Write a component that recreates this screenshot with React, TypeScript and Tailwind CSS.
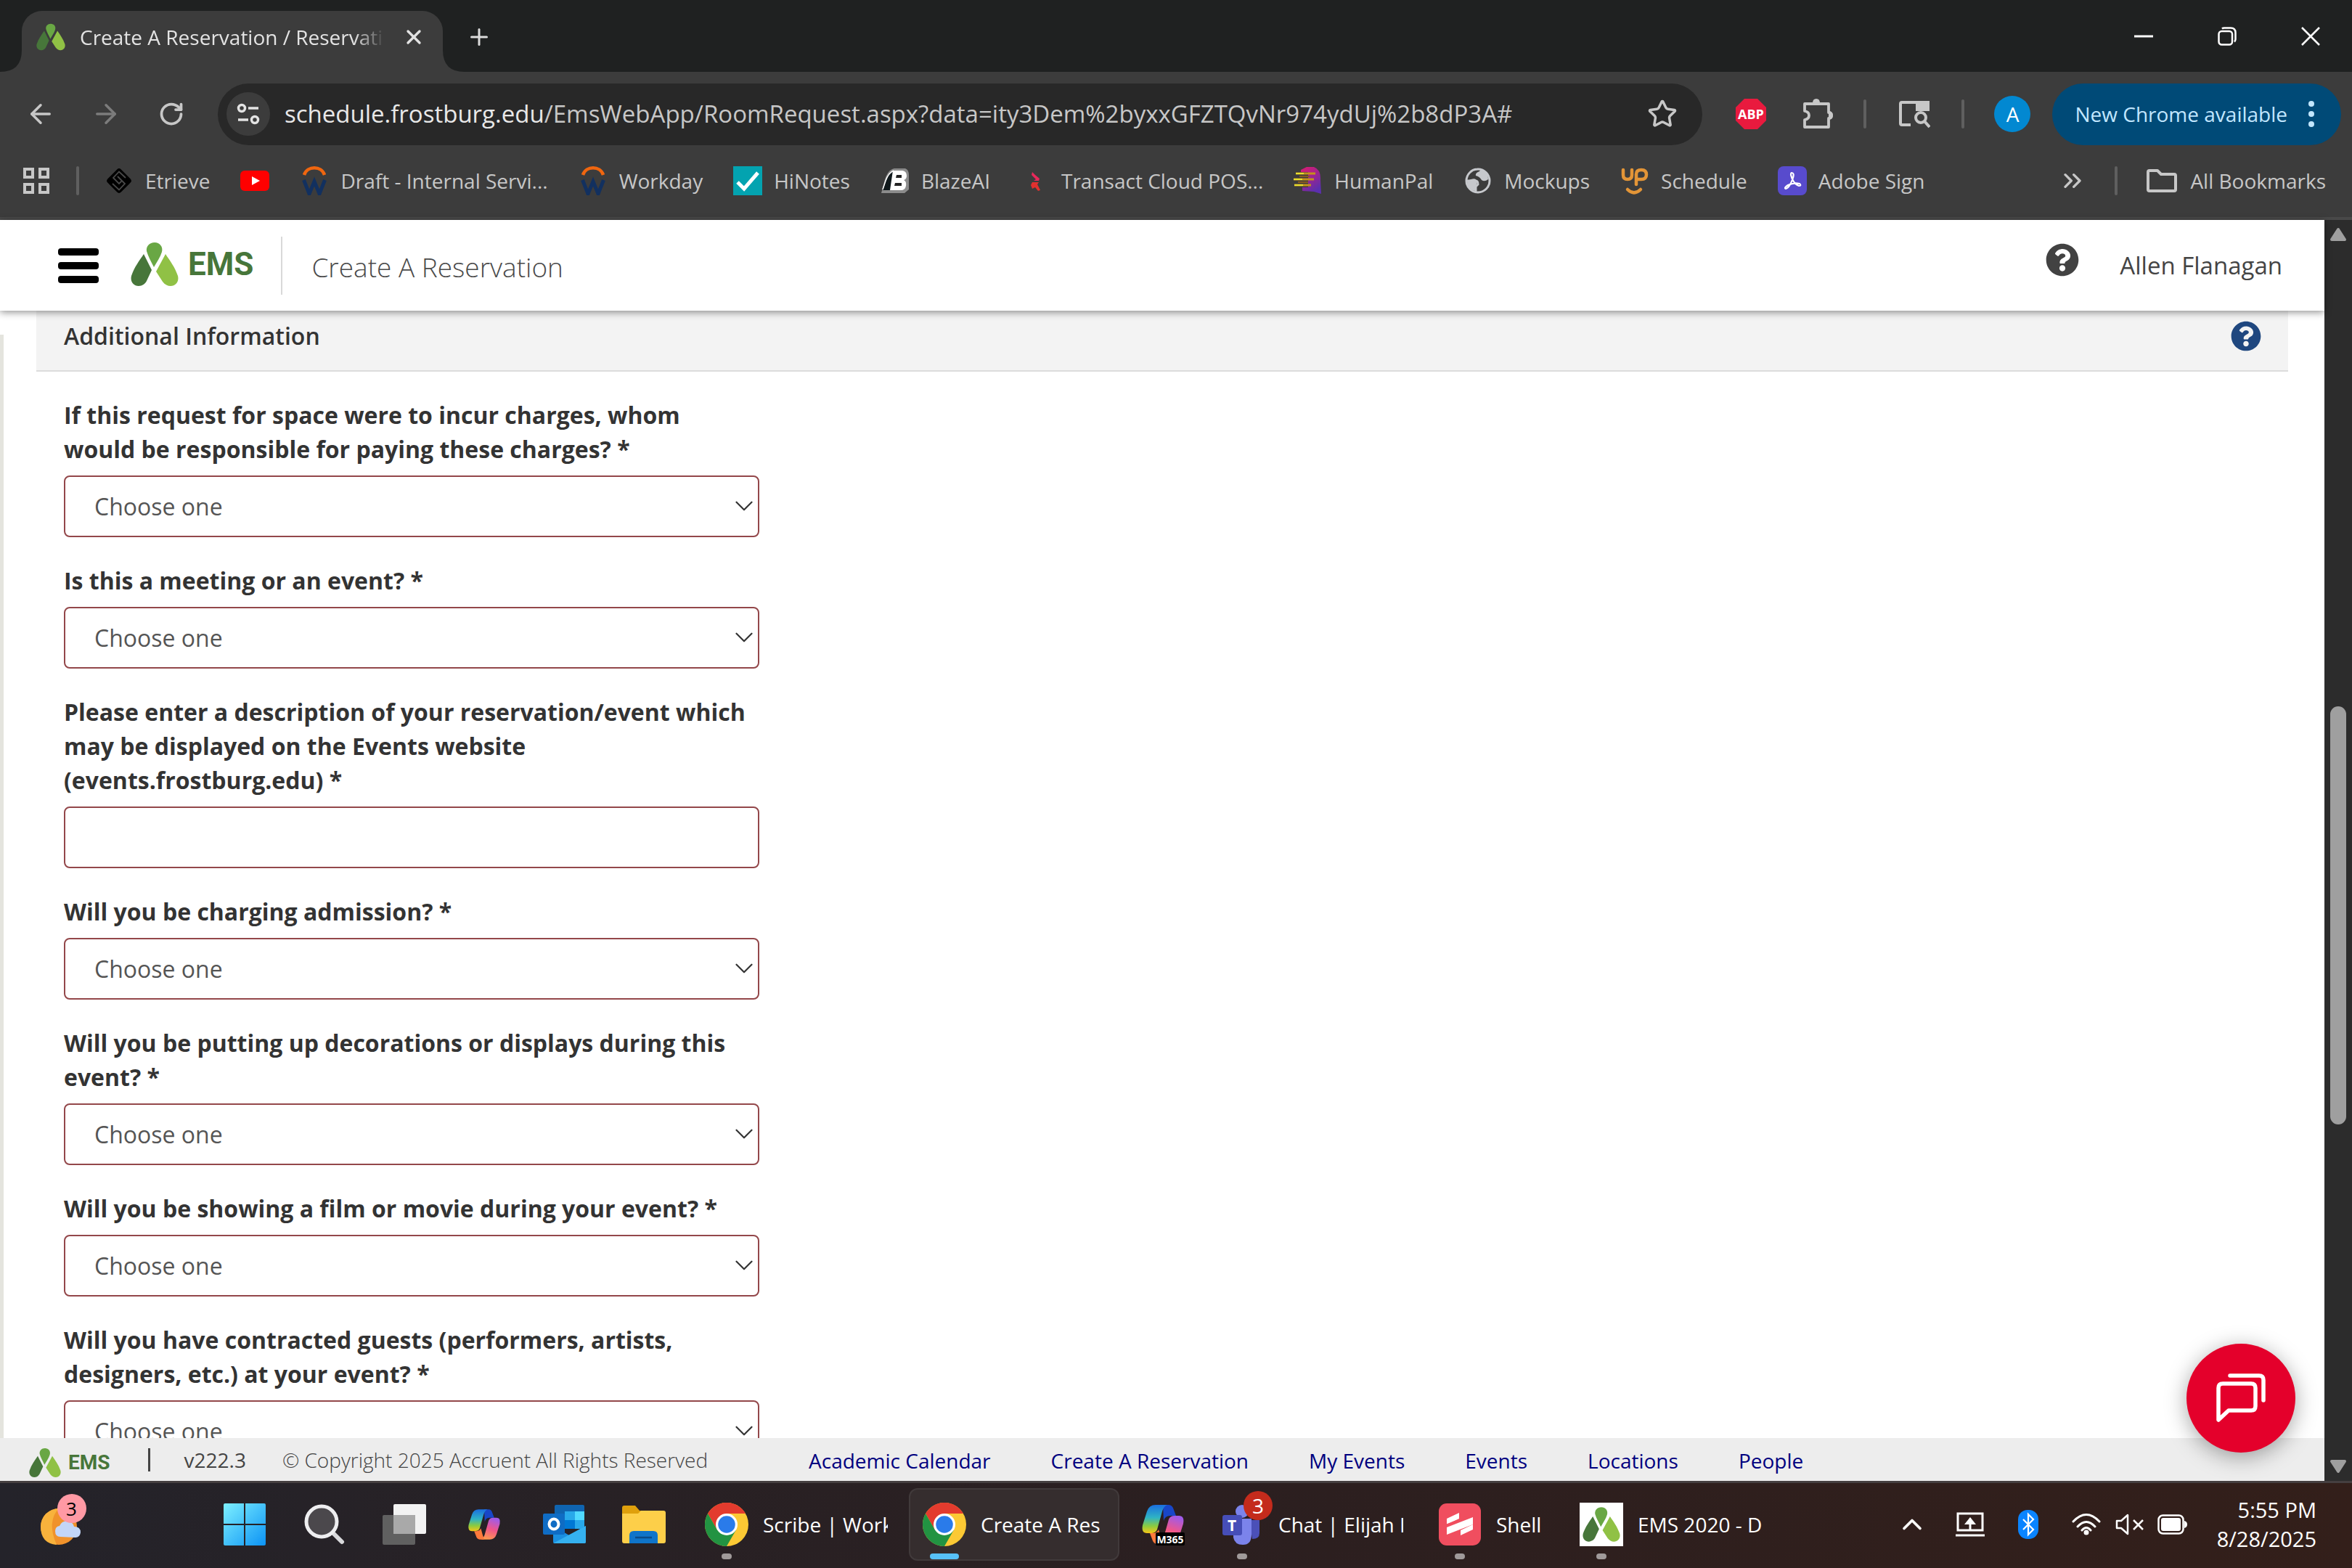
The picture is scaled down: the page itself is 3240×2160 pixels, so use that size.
import React from 'react';
import {
    ArrowLeft, ArrowRight, ChevronDown, ChevronUp, ChevronsRight, Plus, RotateCw, Star, X,
} from 'lucide-react';
import { FaQuestionCircle } from 'react-icons/fa';

interface Field {
    id: string;
    label: string;
    type: 'select' | 'text';
}

const FIELDS: Field[] = [
    { id: 'charges', label: 'If this request for space were to incur charges, whom would be responsible for paying these charges? *', type: 'select' },
    { id: 'kind', label: 'Is this a meeting or an event? *', type: 'select' },
    { id: 'description', label: 'Please enter a description of your reservation/event which may be displayed on the Events website (events.frostburg.edu) *', type: 'text' },
    { id: 'admission', label: 'Will you be charging admission? *', type: 'select' },
    { id: 'decorations', label: 'Will you be putting up decorations or displays during this event? *', type: 'select' },
    { id: 'film', label: 'Will you be showing a film or movie during your event? *', type: 'select' },
    { id: 'guests', label: 'Will you have contracted guests (performers, artists, designers, etc.) at your event? *', type: 'select' },
];

const FOOTER_LINKS = ['Academic Calendar', 'Create A Reservation', 'My Events', 'Events', 'Locations', 'People'];

/* ---------- Logos ---------- */

const EmsMark = ({ className }: { className?: string }) => (
    <svg viewBox="0 0 66 60" className={className} aria-hidden="true">
        <path d="M18 16L29 38L22 53C20 57 16 60 11 60C4 60-1 54 1 46C5 34 12 25 18 16Z" fill="#47763a" />
        <path d="M48 16L35 40L44 54C47 58 51 60 55 60C62 60 67 54 65 46C61 34 54 25 48 16Z" fill="#90c145" />
        <path d="M33 0C40 0 45 6 43 13C41 20 36 27 32 34C28 26 24 19 22 12C21 5 26 0 33 0Z" fill="#69a744" />
    </svg>
);

const ChromeLogo = () => (
    <svg viewBox="0 0 48 48" className="size-15 shrink-0" aria-hidden="true">
        <circle cx="24" cy="24" r="24" fill="#fcc934" />
        <path d="M3.2 12A24 24 0 0 1 44.8 12H24L13.6 30Z" fill="#e33b2e" />
        <path d="M3.2 12L13.6 30L34.4 30L24 48A24 24 0 0 1 3.2 12Z" fill="#229342" />
        <circle cx="24" cy="24" r="12" fill="#fff" />
        <circle cx="24" cy="24" r="9.4" fill="#2a7bea" />
    </svg>
);

const WorkdayLogo = () => (
    <svg viewBox="0 0 40 40" className="size-10">
        <path d="M6 12C10 -1 30 -1 34 12" fill="none" stroke="#f0660f" strokeWidth="4.5" />
        <path d="M5.500 19L13 38L20 21L27 38L34.500 19" fill="none" stroke="#12305f" strokeWidth="5" />
    </svg>
);

const EtrieveLogo = () => (
    <svg viewBox="0 0 40 40" className="size-10">
        <rect x="7" y="7" width="26" height="26" rx="4" fill="#000" transform="rotate(45 20 20)" />
        <path d="M29 16L20 7.500L12 16L20 24L24 20L18 14M11 24L20 32.500L28 24L20 16" fill="none" stroke="#4a4a4a" strokeWidth="1.800" />
    </svg>
);

const YoutubeLogo = () => (
    <svg viewBox="0 0 40 40" className="size-10">
        <rect x="0" y="6" width="40" height="28" rx="6" fill="#f00" />
        <path d="M16 14V26L27 20Z" fill="#fff" />
    </svg>
);

const HiNotesLogo = () => (
    <svg viewBox="0 0 40 40" className="size-10">
        <rect width="40" height="40" fill="#03a3b0" />
        <path d="M6 22L15 31L34 9" fill="none" stroke="#fff" strokeWidth="5" />
    </svg>
);

const BlazeLogo = () => (
    <svg viewBox="0 0 40 40" className="size-10">
        <path d="M1 37L5 22Q9 5 19 3H34Q39 5 39 12V32L33 37Z" fill="#8b8b8b" />
        <path d="M3 33L8 18Q12 8 20 7V33Z" fill="#10191c" />
        <path d="M3 32L7 20Q11 9 18 6" fill="none" stroke="#fff" strokeWidth="1.500" />
        <path d="M17 6H30Q36 7 36 13Q36 18 32 19Q36 21 35 27Q34 33 28 33H13Z" fill="#fff" />
        <path d="M22 12H29V16H21ZM20 23H29V27H19Z" fill="#222" />
    </svg>
);

const TransactLogo = () => (
    <svg viewBox="0 0 40 40" className="size-10">
        <path d="M16 8L20 12L26 17L25 20H18L21 18L15 12Z" fill="#e8285a" />
        <path d="M16 22L25 22L23 25L27 33L24 34L20 29L16 31L14 26Z" fill="#e0302f" />
    </svg>
);

const HumanPalLogo = () => (
    <svg viewBox="0 0 40 40" className="size-10">
        <defs>
            <linearGradient id="hp" x1="0" y1="0" x2="0.5" y2="1">
                <stop offset="0" stopColor="#e01a70" />
                <stop offset="1" stopColor="#5b2fae" />
            </linearGradient>
        </defs>
        <path d="M10 5L18 1H28Q38 5 37 19L38 38L28 35L12 34L12 29H20V8H10Z" fill="url(#hp)" />
        <path d="M3 10H30M0 18H28M1 26H24" stroke="#c4901c" strokeWidth="3" />
        <path d="M8 14H22M6 22H20" stroke="#8a5a20" strokeWidth="2" />
        <path d="M3 10H14M0 18H12M1 26H13" stroke="#e5e02f" strokeWidth="2" />
    </svg>
);

const GlobeLogo = () => (
    <svg viewBox="0 0 40 40" className="size-10">
        <circle cx="20" cy="20" r="16" fill="#3c3c3c" stroke="#c6c8cc" strokeWidth="3" />
        <path d="M5 20Q14 16 17 18Q20 24 17 27L16 34Q5 32 5 20Z" fill="#c6c8cc" />
        <path d="M24 4L22 7Q16 9 17 13Q22 14 25 19Q29 22 34 18Q35 8 24 4Z" fill="#c6c8cc" />
        <path d="M5 20H17Q20 20 20 25L17 28V35" fill="none" stroke="#c6c8cc" strokeWidth="3" />
    </svg>
);

const UpLogo = () => (
    <svg viewBox="0 0 40 40" className="size-10" fill="none" stroke="#e39537" strokeWidth="4.500" strokeLinecap="round">
        <path d="M4 5V12Q4 18 10 18Q16 18 16 12V5M22 25V11Q22 5 29 5Q36 5 36 11.500Q36 18 29 18H24" />
        <path d="M10 32Q19 41 28 32" />
    </svg>
);

const AdobeLogo = () => (
    <svg viewBox="0 0 40 40" className="size-10">
        <rect width="40" height="40" rx="8" fill="#584bcd" />
        <path d="M19 9Q23 9 21 16Q16 30 11 31Q8 30 14 26Q22 22 30 24Q33 27 29 27Q21 24 18 12Q18 9 19 9Z" fill="none" stroke="#fff" strokeWidth="2.200" />
    </svg>
);

const BOOKMARKS: { label: string; icon: React.ReactNode }[] = [
    { label: 'Etrieve', icon: <EtrieveLogo /> },
    { label: '', icon: <YoutubeLogo /> },
    { label: 'Draft - Internal Servi...', icon: <WorkdayLogo /> },
    { label: 'Workday', icon: <WorkdayLogo /> },
    { label: 'HiNotes', icon: <HiNotesLogo /> },
    { label: 'BlazeAI', icon: <BlazeLogo /> },
    { label: 'Transact Cloud POS...', icon: <TransactLogo /> },
    { label: 'HumanPal', icon: <HumanPalLogo /> },
    { label: 'Mockups', icon: <GlobeLogo /> },
    { label: 'Schedule', icon: <UpLogo /> },
    { label: 'Adobe Sign', icon: <AdobeLogo /> },
];

/* ---------- Browser chrome ---------- */

const TabStrip = () => (
    <div className="flex h-[99px] shrink-0 bg-[#1f2121] pl-[30px]">
        <div className="relative mt-[15px] flex w-[580px] items-center rounded-t-[28px] bg-[#3c3c3c] pr-4 pl-5 pb-3">
            <svg viewBox="0 0 30 30" className="absolute bottom-0 -left-[30px] size-[30px]">
                <path d="M30 0V30H0Q30 30 30 0Z" fill="#3c3c3c" />
            </svg>
            <svg viewBox="0 0 30 30" className="absolute bottom-0 -right-[30px] size-[30px]">
                <path d="M0 0V30H30Q0 30 0 0Z" fill="#3c3c3c" />
            </svg>
            <EmsMark className="h-[38px] w-10" />
            <span className="ml-5 w-[420px] overflow-hidden text-[28px] whitespace-nowrap text-[#e3e3e3] [mask-image:linear-gradient(to_right,black_90%,transparent)]">
                Create A Reservation / Reservati
            </span>
            <button aria-label="Close tab" className="ml-auto grid size-12 place-items-center text-[#e3e3e3]">
                <X size={32} strokeWidth={2.5} />
            </button>
        </div>
        <button aria-label="New tab" className="mt-[21px] ml-5 grid size-[60px] place-items-center text-[#dcdcdc]">
            <Plus size={36} strokeWidth={2} />
        </button>
        <div className="ml-auto flex text-white">
            <button aria-label="Minimize" className="grid w-[115px] place-items-center">
                <svg viewBox="0 0 26 26" className="size-[26px]"><path d="M0 13H26" stroke="currentColor" strokeWidth="3" /></svg>
            </button>
            <button aria-label="Restore" className="grid w-[115px] place-items-center">
                <svg viewBox="0 0 26 26" className="size-[26px]" fill="none" stroke="currentColor" strokeWidth="2.5">
                    <rect x="1.500" y="6" width="18.500" height="18.500" rx="4" />
                    <path d="M6 2.500Q7 1.500 9 1.500H18Q24.500 1.500 24.500 8V17Q24.500 19 23 20.500" />
                </svg>
            </button>
            <button aria-label="Close" className="grid w-[115px] place-items-center">
                <svg viewBox="0 0 26 26" className="size-[26px]"><path d="M1 1L25 25M25 1L1 25" stroke="currentColor" strokeWidth="2.500" /></svg>
            </button>
        </div>
    </div>
);

const AddressRow = () => (
    <div className="flex h-[116px] shrink-0 items-center pr-[15px] pl-[26px] text-[#c7c7c7]">
        <button aria-label="Back" className="grid size-15 place-items-center"><ArrowLeft size={42} strokeWidth={2} /></button>
        <button aria-label="Forward" className="ml-[30px] grid size-15 place-items-center text-[#7c7c7c]"><ArrowRight size={42} strokeWidth={2} /></button>
        <button aria-label="Reload" className="ml-[30px] grid size-15 place-items-center"><RotateCw size={36} strokeWidth={2.5} /></button>
        <div className="ml-[34px] flex h-[85px] flex-1 items-center rounded-full bg-[#282828] pr-[34px] pl-3">
            <button aria-label="Site information" className="grid size-15 place-items-center rounded-full bg-[#3c3c3c] text-[#e3e3e3]">
                <svg viewBox="0 0 32 32" className="size-8" fill="none" stroke="currentColor" strokeWidth="3.5">
                    <circle cx="7" cy="8" r="4.500" />
                    <path d="M16 8H30M2 24H16" />
                    <circle cx="25" cy="24" r="4.500" />
                </svg>
            </button>
            <div role="textbox" aria-label="Address" className="ml-5 flex-1 text-[33px] whitespace-nowrap text-[#c7c7c7]">
                <span className="text-[#e8e8e8]">schedule.frostburg.edu</span>/EmsWebApp/RoomRequest.aspx?data=ity3Dem%2byxxGFZTQvNr974ydUj%2b8dP3A#
            </div>
            <button aria-label="Bookmark this tab"><Star size={42} strokeWidth={2} /></button>
        </div>
        <button aria-label="AdBlock Plus" className="ml-[46px]">
            <svg viewBox="0 0 42 42" className="size-[42px]">
                <path d="M12 0H30L42 12V30L30 42H12L0 30V12Z" fill="#e91a3e" />
                <text x="21" y="28" textAnchor="middle" fontSize="18" fontWeight="700" fill="#fff">ABP</text>
            </svg>
        </button>
        <button aria-label="Extensions" className="ml-[50px]">
            <svg viewBox="0 0 42 42" className="size-[42px]">
                <path d="M3 7H36V19Q40 19 40 23Q40 27 36 27V39H3V29Q9 28 9 23Q9 18 3 17Z" fill="none" stroke="currentColor" strokeWidth="3.800" strokeLinejoin="round" />
                <path d="M14 6Q14 0 19 0Q24 0 24 6ZM36 17Q42 18 42 23Q42 28 36 29Z" fill="currentColor" />
            </svg>
        </button>
        <span className="ml-[42px] h-10 w-1 rounded-full bg-[#5f5f5f]" />
        <button aria-label="Search tabs" className="ml-11">
            <svg viewBox="0 0 44 40" className="h-10 w-11" fill="none" stroke="currentColor" strokeWidth="4">
                <path d="M17 35H5Q3 35 3 33V6Q3 4 5 4H41V16" />
                <path d="M24 2H43V16H24Z" fill="currentColor" stroke="none" />
                <circle cx="31" cy="25" r="7" />
                <path d="M36 30L43 38" />
            </svg>
        </button>
        <span className="ml-[43px] h-10 w-1 rounded-full bg-[#5f5f5f]" />
        <button aria-label="Profile" className="ml-[41px] grid size-[50px] place-items-center rounded-full bg-[#0288d1] text-[28px] leading-none text-white">A</button>
        <button className="ml-[30px] flex h-[85px] items-center rounded-full bg-[#004a77] pr-[37px] pl-[31px] text-[28px] text-[#c2e7ff]">
            New Chrome available
            <svg viewBox="0 0 8 36" className="ml-[29px] h-9 w-2"><circle cx="4" cy="4" r="4" fill="currentColor" /><circle cx="4" cy="18" r="4" fill="currentColor" /><circle cx="4" cy="32" r="4" fill="currentColor" /></svg>
        </button>
    </div>
);

const BookmarksBar = () => (
    <nav aria-label="Bookmarks" className="flex h-[88px] shrink-0 items-center border-b-4 border-[#494949] pb-4 pr-9 pl-8 text-[28px] text-[#c7c7c7]">
        <button aria-label="Apps">
            <svg viewBox="0 0 36 36" className="size-9" fill="none" stroke="currentColor" strokeWidth="4">
                <path d="M2 2H13V13H2ZM23 2H34V13H23ZM2 23H13V34H2ZM23 23H34V34H23Z" />
            </svg>
        </button>
        <span className="ml-[37px] h-10 w-1 rounded-full bg-[#5f5f5f]" />
        <div className="ml-[35px] flex items-center gap-[42px]">
            {BOOKMARKS.map((b) => (
                <a key={b.label} href="#" aria-label={b.label || 'YouTube'} className="flex items-center gap-4 whitespace-nowrap">
                    {b.icon}
                    {b.label && <span>{b.label}</span>}
                </a>
            ))}
        </div>
        <button aria-label="More bookmarks" className="ml-auto"><ChevronsRight size={40} strokeWidth={2} /></button>
        <span className="ml-[38px] h-10 w-1 rounded-full bg-[#5f5f5f]" />
        <button className="ml-10 flex items-center gap-[18px]">
            <svg viewBox="0 0 42 32" className="h-8 w-[42px]" fill="none" stroke="currentColor" strokeWidth="4" strokeLinejoin="round">
                <path d="M2 4Q2 2 4 2H15L20 7H38Q40 7 40 9V28Q40 30 38 30H4Q2 30 2 28Z" />
            </svg>
            All Bookmarks
        </button>
    </nav>
);

/* ---------- EMS page ---------- */

const PageHeader = () => (
    <header className="z-10 flex h-[125px] shrink-0 items-center bg-white pr-[58px] pl-20 shadow-[0_2px_10px_rgba(0,0,0,0.45)]">
        <button aria-label="Menu" className="flex w-14 flex-col gap-[9px]">
            <span className="h-[10px] rounded-sm bg-black" />
            <span className="h-[10px] rounded-sm bg-black" />
            <span className="h-[10px] rounded-sm bg-black" />
        </button>
        <a href="#" className="ml-11 flex items-center gap-[13px] pb-1 font-['Roboto',sans-serif] text-[44px] leading-none font-bold text-[#47763a]">
            <EmsMark className="h-15 w-[66px]" />
            EMS
        </a>
        <span className="ml-[38px] h-20 w-[2px] bg-[#d9d9d9]" />
        <h1 className="ml-10 text-[37px] leading-[48px] font-light text-[#4a4a4a] pt-1">Create A Reservation</h1>
        <button aria-label="Help" className="ml-auto pb-4 text-[#424242]"><FaQuestionCircle size={46} /></button>
        <a href="#" className="ml-14 text-[33px] text-[#444]">Allen Flanagan</a>
    </header>
);

const FormField: React.FC<{ field: Field }> = ({ field }) => (
    <div className="mb-9">
        <label htmlFor={field.id} className="mb-[13px] block max-w-[950px] text-[32px] leading-[47px] font-bold text-[#333]">
            {field.label}
        </label>
        {field.type === 'text' ? (
            <input id={field.id} type="text" className="block h-[85px] w-full rounded-lg border-2 border-[#93474a] bg-white px-10 text-[32px] text-[#555] outline-none" />
        ) : (
            <div className="relative">
                <select id={field.id} className="block h-[85px] w-full appearance-none rounded-lg border-2 border-[#93474a] bg-white px-10 text-[32px] text-[#555] outline-none">
                    <option>Choose one</option>
                </select>
                <ChevronDown size={42} strokeWidth={1.25} className="pointer-events-none absolute top-[21px] right-0 text-[#333]" />
            </div>
        )}
    </div>
);

const PageBody = () => (
    <main className="flex min-h-0 flex-1 overflow-hidden bg-white">
        <div className="mt-[33px] w-[5px] shrink-0 bg-[#e4e4de]" />
        <section className="mr-[50px] ml-[45px] flex-1">
            <div className="flex h-[84px] items-center justify-between border-b-2 border-[#dcdcdc] bg-[#f3f3f3] pr-[37px] pb-3 pl-[38px]">
                <h2 className="text-[32px] font-semibold text-[#333]">Additional Information</h2>
                <button aria-label="Section help" className="text-[#1f477f]"><FaQuestionCircle size={42} /></button>
            </div>
            <form className="ml-[38px] w-[958px] pt-9">
                {FIELDS.map((f) => <FormField key={f.id} field={f} />)}
            </form>
        </section>
    </main>
);

const PageFooter = () => (
    <footer className="flex h-[59px] shrink-0 items-center pl-10 bg-[#ededed] text-[28px] whitespace-nowrap text-[#444]">
        <a href="#" className="flex items-center gap-[10px] pt-2 font-['Roboto',sans-serif] text-[28px] leading-none font-bold text-[#47763a]">
            <EmsMark className="h-10 w-[44px]" />
            EMS
        </a>
        <span className="ml-[52px] h-8 w-[3px] bg-[#444]" />
        <span className="ml-[47px]">v222.3</span>
        <span className="ml-[50px] font-light">© Copyright 2025 Accruent All Rights Reserved</span>
        <nav className="ml-[139px] flex gap-[83px] pt-[2px]">
            {FOOTER_LINKS.map((l) => <a key={l} href="#" className="text-[#00007f]">{l}</a>)}
        </nav>
    </footer>
);

const ChatButton = () => (
    <button aria-label="Chat" className="absolute right-10 bottom-[39px] z-20 grid size-[150px] place-items-center rounded-full bg-[#e4002b] shadow-[0_6px_30px_rgba(0,0,0,0.35)]">
        <svg viewBox="0 0 68 68" className="size-[68px]" fill="none" stroke="#fff" strokeWidth="5.5" strokeLinecap="round" strokeLinejoin="round">
            <path d="M3 64V20Q3 14 9 14H48Q54 14 54 20V45Q54 51 48 51H17Z" />
            <path d="M19 3H59Q65 3 65 9V37" />
        </svg>
    </button>
);

const Scrollbar = () => (
    <div className="flex w-[38px] shrink-0 flex-col items-center justify-between bg-[#2c2c2c] py-[10px]">
        <svg viewBox="0 0 24 20" className="h-5 w-6"><path d="M12 3L21 17H3Z" fill="#9f9f9f" stroke="#9f9f9f" strokeWidth="4" strokeLinejoin="round" /></svg>
        <div className="flex w-[22px] flex-1 flex-col">
            <span className="grow-[640]" />
            <span className="grow-[577] rounded-full bg-[#9f9f9f]" />
            <span className="grow-[461]" />
        </div>
        <svg viewBox="0 0 24 20" className="h-5 w-6"><path d="M12 17L21 3H3Z" fill="#9f9f9f" stroke="#9f9f9f" strokeWidth="4" strokeLinejoin="round" /></svg>
    </div>
);

/* ---------- Taskbar ---------- */

const IconButton: React.FC<{ label: string; className?: string; children: React.ReactNode }> = ({ label, className, children }) => (
    <button aria-label={label} className={'grid h-[100px] place-items-center ' + (className ?? 'w-[110px]')}>{children}</button>
);

interface AppProps {
    label: string;
    icon: React.ReactNode;
    width?: string;
    active?: boolean;
}

const AppButton: React.FC<AppProps> = ({ label, icon, width = 'w-[290px]', active }) => (
    <button className={'relative ml-[10px] flex h-[100px] items-center gap-5 rounded-xl ' + width + (active ? ' border-2 border-[#413a3b] bg-[#352d2e] px-[17px]' : ' px-[19px]')}>
        {icon}
        <span className="min-w-0 flex-1 overflow-hidden text-left text-[28px] text-clip whitespace-nowrap">{label}</span>
        <span className={'absolute h-2 rounded-full ' + (active ? 'bottom-0 left-[27px] w-10 bg-[#57c1f8]' : 'bottom-[2px] left-[42px] w-[14px] bg-[#a09a9a]')} />
    </button>
);

const TeamsLogo = () => (
    <span className="relative size-15 shrink-0">
        <svg viewBox="0 0 60 60" className="size-15">
            <circle cx="30" cy="12" r="9" fill="#7b83eb" />
            <path d="M40 24H54V42Q54 50 44 50Z" fill="#4b50b8" />
            <path d="M18 22H43V44Q43 58 31 58Q20 58 18 48Z" fill="#7b83eb" />
            <rect x="3" y="17" width="27" height="28" rx="3" fill="#464eb8" />
            <text x="16" y="39" textAnchor="middle" fontSize="21" fontWeight="700" fill="#fff">T</text>
        </svg>
        <span className="absolute -top-4 -right-3 grid size-10 place-items-center rounded-full bg-[#c42b1c] text-[28px] leading-none text-white">3</span>
    </span>
);

const ShellLogo = () => (
    <svg viewBox="0 0 60 60" className="size-15 shrink-0">
        <rect x="1" y="1" width="58" height="58" rx="11" fill="#f04e5f" />
        <path d="M12 22L29 14V22L12 30ZM12 34L48 20V30L12 44Z" fill="#fff" />
        <path d="M31 38L48 30V37L31 45Z" fill="#fff" />
        <path d="M12 31L48 17" stroke="#f04e5f" strokeWidth="3" />
    </svg>
);

const CopilotLogo: React.FC<{ className: string; badge?: boolean }> = ({ className, badge }) => (
    <svg viewBox="0 0 60 60" className={className}>
        <defs>
            <linearGradient id="cpa" x1="0" y1="0" x2="0" y2="1">
                <stop offset="0" stopColor="#1b6fe0" />
                <stop offset="0.45" stopColor="#2fb3c4" />
                <stop offset="0.75" stopColor="#8ccb3f" />
                <stop offset="1" stopColor="#f5c518" />
            </linearGradient>
            <linearGradient id="cpb" x1="0.6" y1="0" x2="0.3" y2="1">
                <stop offset="0" stopColor="#a05be8" />
                <stop offset="0.5" stopColor="#f0558a" />
                <stop offset="1" stopColor="#ff9a4d" />
            </linearGradient>
        </defs>
        <path d="M30 3H38Q43 3 45 10L48 18H40Q33 18 31 25Z" fill="#1846c8" />
        <path d="M20 3H36Q31 5 29 12L22 37Q20 42 14 42H8Q0 42 2 31L8 12Q11 3 20 3Z" fill="url(#cpa)" />
        <path d="M40 57H24Q29 55 31 48L38 23Q40 18 46 18H52Q60 18 58 29L52 48Q49 57 40 57Z" fill="url(#cpb)" />
        <path d="M30 57H22Q17 57 15 50L12 42H16Q22 42 24 37L27 48Z" fill="#ff7a3c" />
        {badge && (
            <>
                <rect x="20" y="41" width="40" height="18" rx="2" fill="#000" />
                <text x="40" y="56" textAnchor="middle" fontSize="14" fontWeight="700" fill="#fff">M365</text>
            </>
        )}
    </svg>
);

const Taskbar = () => (
    <div className="flex h-[120px] shrink-0 items-center border-t-3 border-[#453f40] bg-linear-to-r from-[#24232a] via-[#2b1f20] via-50% to-[#331f1a] pr-[49px] pb-[3px] text-white">
        <IconButton label="Weather" className="ml-[53px] w-[65px]">
            <span className="relative">
                <svg viewBox="0 0 60 60" className="size-[60px]">
                    <circle cx="25" cy="33" r="25" fill="#f0922b" />
                    <path d="M0 33A25 25 0 0 1 25 8Q8 26 22 58Q0 56 0 33Z" fill="#f8b23c" />
                    <path d="M27 47Q20 47 20 39Q20 33 26 32Q30 24 38 26Q45 27 46 33Q55 33 55 41Q54 48 48 48Z" fill="#c3d6f7" />
                </svg>
                <span className="absolute -top-3 left-[23px] grid size-10 place-items-center rounded-full bg-[#ff99a4] text-[26px] leading-none text-black">3</span>
            </span>
        </IconButton>
        <div className="ml-[164px] flex items-center">
            <IconButton label="Start">
                <svg viewBox="0 0 58 58" className="size-[58px]">
                    <defs>
                        <linearGradient id="win" x1="0" y1="0" x2="1" y2="1">
                            <stop offset="0" stopColor="#7df0ff" />
                            <stop offset="1" stopColor="#0c93f5" />
                        </linearGradient>
                    </defs>
                    <path d="M2 0H28V28H0V2Q0 0 2 0ZM30 0H56Q58 0 58 2V28H30ZM0 30H28V58H2Q0 58 0 56ZM30 30H58V56Q58 58 56 58H30Z" fill="url(#win)" />
                </svg>
            </IconButton>
            <IconButton label="Search">
                <svg viewBox="0 0 56 56" className="size-14">
                    <path d="M39 39L52 52" stroke="#d9d9dc" strokeWidth="6" strokeLinecap="round" />
                    <circle cx="24" cy="24" r="21" fill="#4b484c" stroke="#eeeef0" strokeWidth="5" />
                </svg>
            </IconButton>
            <IconButton label="Task view">
                <svg viewBox="0 0 60 56" className="h-14 w-15">
                    <rect x="15" y="0" width="45" height="41" rx="2" fill="#f2f2f2" />
                    <rect x="0" y="15" width="45" height="41" rx="2" fill="#606060" />
                    <path d="M15 15H45V41H15Z" fill="#a9a9a9" />
                </svg>
            </IconButton>
            <IconButton label="Copilot"><CopilotLogo className="size-[46px]" /></IconButton>
            <IconButton label="Outlook">
                <svg viewBox="0 0 60 56" className="h-14 w-15">
                    <rect x="17" y="1" width="41" height="26" rx="2" fill="#0f64b0" />
                    <path d="M31 10H45V22H31Z" fill="#28a8ea" />
                    <path d="M45 10H58V22H45Z" fill="#50d9ff" />
                    <path d="M31 22H45V34H31Z" fill="#0078d4" />
                    <path d="M45 22H58V34H45Z" fill="#28a8ea" />
                    <path d="M15 30L37 43L60 30V52Q60 54 58 54H17Q15 54 15 52Z" fill="#1a8fe0" />
                    <path d="M60 30L15 54H58Q60 54 60 52Z" fill="#35b1f0" />
                    <rect x="1" y="13" width="30" height="29" rx="2" fill="#0f6cc4" />
                    <ellipse cx="16" cy="27.500" rx="6.500" ry="7" fill="none" stroke="#fff" strokeWidth="4" />
                </svg>
            </IconButton>
            <IconButton label="File Explorer">
                <svg viewBox="0 0 60 54" className="h-[54px] w-15">
                    <path d="M0 4Q0 1 3 1H18L24 8H56Q58 8 58 11V20H0Z" fill="#dfa00c" />
                    <path d="M0 12H22L26 8H57Q60 8 60 11V50Q60 53 57 53H3Q0 53 0 50Z" fill="#fdcf49" />
                    <path d="M10 53V42Q10 36 16 36H43Q49 36 49 42V53Z" fill="#0f74c9" />
                    <path d="M18 45H41" stroke="#0a4a86" strokeWidth="2.500" />
                </svg>
            </IconButton>
            <AppButton label="Scribe | Work" icon={<ChromeLogo />} />
            <AppButton label="Create A Res" icon={<ChromeLogo />} active />
            <IconButton label="Microsoft 365 Copilot" className="ml-[10px] w-[100px]"><CopilotLogo className="size-[60px]" badge /></IconButton>
            <AppButton label="Chat | Elijah I" icon={<TeamsLogo />} />
            <AppButton label="Shell" icon={<ShellLogo />} width="w-[185px]" />
            <AppButton
                label="EMS 2020 - D"
                icon={<span className="grid size-15 shrink-0 place-items-center bg-white"><EmsMark className="h-12 w-[52px]" /></span>}
            />
        </div>
        <div className="ml-auto flex items-center">
            <button aria-label="Show hidden icons"><ChevronUp size={44} strokeWidth={2} /></button>
            <svg viewBox="0 0 40 34" className="ml-[38px] h-[34px] w-10" fill="none" stroke="#fff" strokeWidth="3">
                <path d="M3 2H37V25H3ZM0 32H40M20 25V14" />
                <path d="M20 7L28 17H12Z" fill="#fff" stroke="none" />
            </svg>
            <svg viewBox="0 0 28 40" className="ml-[46px] h-10 w-7">
                <rect width="28" height="40" rx="13" fill="#0a84ff" />
                <path d="M7 13L21 27L14 34V6L21 13L7 27" fill="none" stroke="#fff" strokeWidth="2.200" />
            </svg>
            <svg viewBox="0 0 40 30" className="ml-[46px] h-[30px] w-10" fill="none" stroke="#fff" strokeWidth="3" strokeLinecap="round">
                <path d="M2 11Q20 -8 38 11M8 18Q20 5 32 18M14 23Q20 16 26 23" />
                <circle cx="20" cy="26" r="2" fill="#fff" />
            </svg>
            <svg viewBox="0 0 40 32" className="ml-5 h-8 w-10" fill="none" stroke="#fff" strokeWidth="2.5" strokeLinejoin="round">
                <path d="M2 11H8L17 3V29L8 21H2ZM25 10L38 23M38 10L25 23" />
            </svg>
            <svg viewBox="0 0 42 28" className="ml-[18px] h-7 w-[42px]">
                <rect x="1.500" y="1.500" width="34" height="25" rx="6" fill="none" stroke="#fff" strokeWidth="2.500" />
                <rect x="5" y="5" width="27" height="18" rx="3" fill="#fff" />
                <path d="M37 9Q41 10 41 14Q41 18 37 19Z" fill="#fff" />
            </svg>
            <div className="ml-10 text-right text-[29px] leading-10">
                <div>5:55 PM</div>
                <div>8/28/2025</div>
            </div>
        </div>
    </div>
);

export default function App() {
    return (
        <div className="flex h-screen flex-col overflow-hidden bg-[#3c3c3c] font-['Open_Sans','Noto_Sans',sans-serif]">
            <TabStrip />
            <AddressRow />
            <BookmarksBar />
            <div className="flex min-h-0 flex-1">
                <div className="relative flex min-w-0 flex-1 flex-col">
                    <PageHeader />
                    <PageBody />
                    <PageFooter />
                    <ChatButton />
                </div>
                <Scrollbar />
            </div>
            <Taskbar />
        </div>
    );
}
